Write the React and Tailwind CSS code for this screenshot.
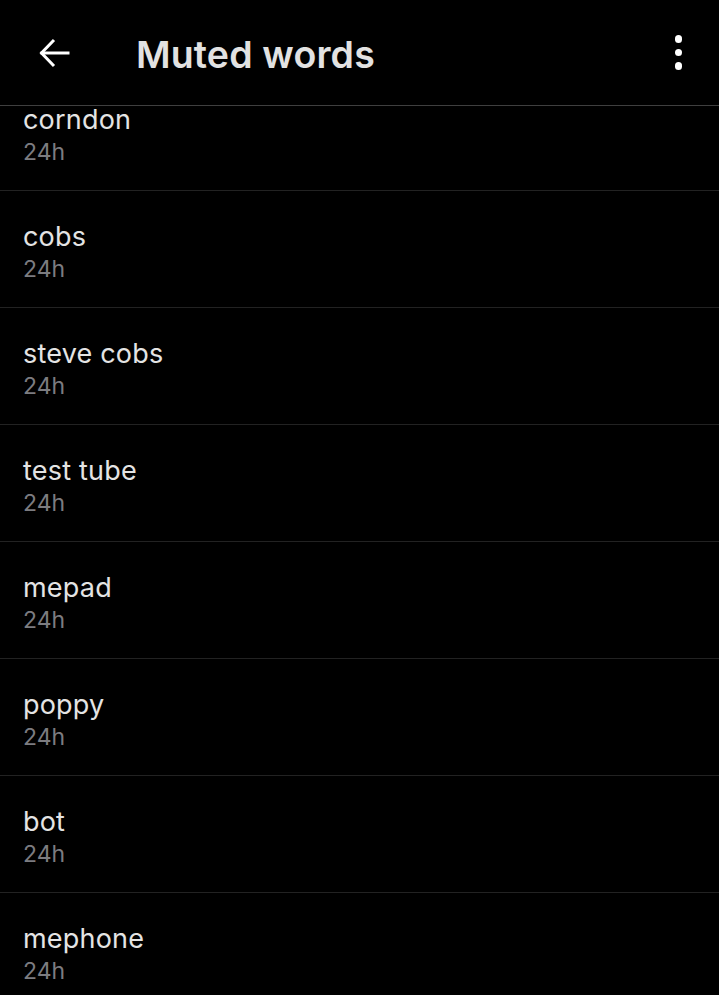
import React from 'react';

const words = [
  'corndon',
  'cobs',
  'steve cobs',
  'test tube',
  'mepad',
  'poppy',
  'bot',
  'mephone',
];

const MutedWords = () => {
  return (
    <div
      className="h-[995px] w-full overflow-hidden bg-black flex flex-col"
      style={{ fontFamily: 'Inter, "Noto Sans", sans-serif' }}
    >
      <header className="h-[106px] shrink-0 flex items-center border-b border-[#3f3f3f]">
        <button className="w-[106px] h-[105px] flex items-center justify-center text-white pl-[1px]">
          <svg width="32" height="32" viewBox="0 0 32 32" fill="none" stroke="currentColor" strokeWidth="3" strokeLinecap="square">
            <path d="M30 16H4" />
            <path d="M16 3L3.5 16L16 29" strokeLinecap="butt" />
          </svg>
        </button>
        <h1 className="ml-[30px] mt-[5px] text-[37.5px] leading-none font-semibold text-[#e2e2e2] tracking-[0.15px]">
          Muted words
        </h1>
        <div className="ml-auto mr-[37px] flex flex-col items-center gap-[6px]">
          <span className="w-[7.5px] h-[7.5px] rounded-full bg-white" />
          <span className="w-[7.5px] h-[7.5px] rounded-full bg-white" />
          <span className="w-[7.5px] h-[7.5px] rounded-full bg-white" />
        </div>
      </header>

      <div className="flex-1 overflow-hidden">
        <ul className="-mt-[32px]">
          {words.map((w) => (
            <li key={w} className="h-[117px] border-b border-[#222222] pl-[23px] pt-[28px]">
              <div className="text-[27px] leading-[36px] text-[#e4e4e4] tracking-[0.2px]">{w}</div>
              <div className="text-[23px] leading-[29px] text-[#7c7c80]">24h</div>
            </li>
          ))}
        </ul>
      </div>
    </div>
  );
};

export default function App() {
  return <MutedWords />;
}
